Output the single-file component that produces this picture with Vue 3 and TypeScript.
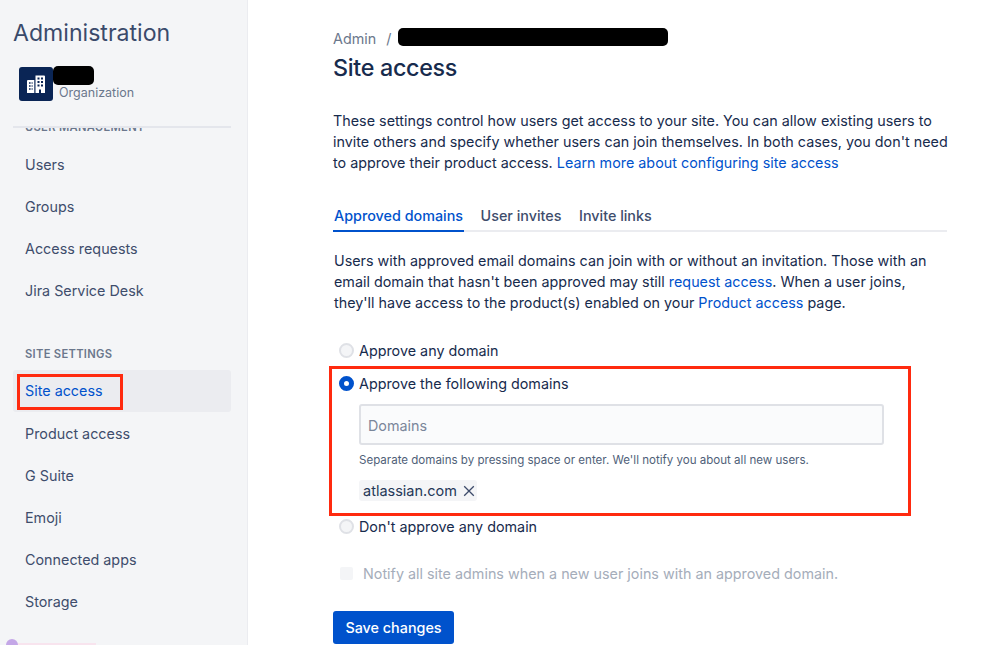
<script setup lang="ts">
const userItems: string[] = ['Users', 'Groups', 'Access requests', 'Jira Service Desk']
const siteItems: string[] = ['Site access', 'Product access', 'G Suite', 'Emoji', 'Connected apps', 'Storage']
</script>

<template>
  <div class="page">
    <aside class="side">
      <h2 class="side-title">Administration</h2>
      <div class="org">
        <div class="org-icon">
          <svg width="20" height="20" viewBox="0 0 20 20" fill="none">
            <path d="M9.5 1.5h8.5a1 1 0 0 1 1 1V19h-4v-3.5h-2V19H9.5z" fill="#fff" />
            <path d="M8.3 6H2a1 1 0 0 0-1 1v12h7.3z" fill="#fff" />
            <path d="M3 9h1.6M5.6 9h1M3 12h1.6M5.6 12h1M3 15h1.6M5.6 15h1" stroke="#0a2555" stroke-width="1.6" />
            <path d="M11.5 4.5h2M15 4.5h2M11.5 8h2M15 8h2M11.5 11.5h2M15 11.5h2" stroke="#0a2555" stroke-width="1.8" />
          </svg>
        </div>
        <div class="org-text">
          <span class="redact org-redact"></span>
          <span class="org-sub">Organization</span>
        </div>
      </div>
      <div class="scroller">
        <div class="scroll-inner">
          <div class="section first">USER MANAGEMENT</div>
          <a v-for="i in userItems" :key="i" class="nav">{{ i }}</a>
          <div class="section second">SITE SETTINGS</div>
          <a v-for="i in siteItems" :key="i" class="nav" :class="{ active: i === 'Site access' }">
            {{ i }}
            <span v-if="i === 'Site access'" class="mark side-mark"></span>
          </a>
        </div>
      </div>
      <div class="profile"><span class="dot"></span><span class="pill"></span></div>
    </aside>

    <main class="main">
      <div class="crumbs">
        <span>Admin</span><span class="slash">/</span><span class="redact crumb-redact"></span>
      </div>
      <h1 class="title">Site access</h1>
      <p class="intro">
        These settings control how users get access to your site. You can allow existing users to invite others and specify whether users can join themselves. In both cases, you don't need to approve their product access.
        <a class="link">Learn more about configuring site access</a>
      </p>
      <div class="tabs">
        <span class="tab on">Approved domains</span>
        <span class="tab">User invites</span>
        <span class="tab">Invite links</span>
      </div>
      <p class="desc">
        Users with approved email domains can join with or without an invitation. Those with an email domain that hasn't been approved may still <a class="link">request access</a>. When a user joins, they'll have access to the product(s) enabled on your <a class="link">Product access</a> page.
      </p>
      <div class="opt first-opt"><span class="radio"></span>Approve any domain</div>
      <div class="boxed">
        <div class="opt"><span class="radio checked"></span>Approve the following domains</div>
        <div class="field">Domains</div>
        <div class="help">Separate domains by pressing space or enter. We'll notify you about all new users.</div>
        <div class="tag">
          atlassian.com
          <svg width="14" height="14" viewBox="0 0 14 14" fill="none">
            <path d="M2.2 2.2l9.6 9.6M11.8 2.2l-9.6 9.6" stroke="#3d4b6a" stroke-width="1.3" />
          </svg>
        </div>
        <span class="mark main-mark"></span>
      </div>
      <div class="opt"><span class="radio"></span>Don't approve any domain</div>
      <div class="check-row"><span class="check"></span>Notify all site admins when a new user joins with an approved domain.</div>
      <button class="save" type="button">Save changes</button>
    </main>
  </div>
</template>

<style>
html, body { margin: 0; background: #fff; }
</style>

<style scoped>
.page {
  display: flex;
  width: 999px;
  height: 645px;
  overflow: hidden;
  font-family: Inter, "Liberation Sans", sans-serif;
  font-size: 14.35px;
  color: #172b4d;
  background: #fff;
}
.side {
  position: relative;
  width: 248px;
  flex: none;
  box-sizing: border-box;
  padding: 16px 16px 0 13px;
  background: #f4f5f7;
  border-right: 1px solid #ebecf0;
  display: flex;
  flex-direction: column;
}
.side-title {
  margin: 0;
  font-size: 23.1px;
  line-height: 34px;
  font-weight: 400;
  color: #3a4a6b;
}
.org {
  display: flex;
  margin: 17px 0 0 6px;
  height: 42px;
}
.org-icon {
  width: 34px;
  height: 34px;
  border-radius: 3px;
  background: #0a2555;
  display: flex;
  align-items: center;
  justify-content: center;
}
.org-text {
  position: relative;
  padding: 18px 0 0 6px;
}
.org-sub {
  font-size: 12.5px;
  line-height: 16px;
  color: #6b778c;
  display: block;
}
.redact {
  display: block;
  background: #000;
  border-radius: 5px;
}
.org-redact {
  position: absolute;
  left: 0;
  top: -1px;
  width: 41px;
  height: 19px;
}
.scroller {
  margin-top: 17px;
  border-top: 2px solid #e4e6ec;
  height: 520px;
  overflow: hidden;
}
.scroll-inner {
  margin-top: -8px;
}
.section {
  padding-left: 12px;
  font-size: 11.2px;
  line-height: 14px;
  font-weight: 600;
  letter-spacing: 0.3px;
  color: #6b778c;
}
.first { margin-bottom: 10px; }
.second { margin-top: 35px; margin-bottom: 9px; }
.nav {
  position: relative;
  display: block;
  height: 42px;
  line-height: 42px;
  padding-left: 12px;
  color: #3e4d6c;
  border-radius: 3px;
}
.nav.active {
  color: #0052cc;
  background: #ebecf0;
  margin-bottom: 1px;
}
.mark {
  position: absolute;
  box-sizing: border-box;
  border: 3px solid #ff2a0f;
}
.side-mark {
  left: 4px;
  top: 4px;
  width: 106px;
  height: 36px;
}
.profile {
  position: absolute;
  left: 6px;
  top: 639px;
  display: flex;
}
.dot {
  width: 12px;
  height: 12px;
  border-radius: 50%;
  background: #c4a7e7;
}
.pill {
  width: 78px;
  height: 6px;
  margin-top: 4px;
  background: #f8e4ee;
}
.main {
  flex: 1;
  min-width: 0;
  padding: 28px 52px 0 85px;
}
.crumbs {
  display: flex;
  align-items: center;
  height: 20px;
  color: #6b778c;
}
.slash { margin: 0 7px 0 10px; }
.crumb-redact {
  width: 270px;
  height: 18px;
  margin-top: -3px;
}
.title {
  margin: 7px 0 0;
  font-size: 23.3px;
  line-height: 26px;
  font-weight: 500;
  letter-spacing: -0.3px;
  color: #172b4d;
}
.intro {
  margin: 29px -4px 0 0;
  line-height: 21px;
}
.link { color: #0052cc; }
.tabs {
  display: flex;
  gap: 15.5px;
  margin-top: 31px;
  height: 28px;
  box-sizing: border-box;
  border-bottom: 2px solid #ebecf0;
}
.tab {
  height: 28px;
  box-sizing: border-box;
  padding: 1px 1px 0;
  line-height: 21px;
  font-weight: 500;
  color: #3e4d6c;
}
.tab.on {
  color: #0052cc;
  border-bottom: 2px solid #0052cc;
}
.desc {
  margin: 18px 0 0 1px;
  line-height: 21px;
}
.opt {
  display: flex;
  align-items: center;
  height: 20px;
  margin-left: 6px;
  gap: 5px;
}
.first-opt { margin-top: 27px; }
.radio {
  width: 15px;
  height: 15px;
  box-sizing: border-box;
  border-radius: 50%;
  border: 2px solid #dfe1e6;
  background: #f4f5f7;
  flex: none;
}
.radio.checked {
  border: 5px solid #0052cc;
  background: #fff;
}
.boxed {
  position: relative;
  margin-top: 13px;
  height: 143px;
}
.field {
  margin: 11px 0 0 26px;
  width: 525px;
  height: 41px;
  box-sizing: border-box;
  border: 2px solid #dfe1e6;
  border-radius: 3px;
  background: #fafbfc;
  padding-left: 7px;
  line-height: 40px;
  color: #7a869a;
}
.help {
  margin: 8px 0 0 26px;
  font-size: 11.55px;
  line-height: 14px;
  color: #505f79;
}
.tag {
  display: flex;
  align-items: center;
  gap: 5px;
  width: fit-content;
  margin: 13px 0 0 26px;
  height: 21px;
  padding: 0 1px 0 4px;
  border-radius: 3px;
  background: #f4f5f7;
  font-size: 14.5px;
  color: #253858;
}
.main-mark {
  left: -4px;
  top: -7px;
  width: 582px;
  height: 150px;
}
.check-row {
  display: flex;
  align-items: center;
  gap: 10px;
  margin: 27px 0 0 7px;
  height: 20px;
  color: #a5adba;
}
.check {
  width: 13px;
  height: 13px;
  border-radius: 2px;
  background: #f4f5f7;
  flex: none;
}
.save {
  display: block;
  margin-top: 28px;
  width: 121px;
  height: 33px;
  border: 0;
  border-radius: 3px;
  background: #0052cc;
  color: #fff;
  font: 500 14.35px Inter, "Liberation Sans", sans-serif;
  padding: 0;
}
</style>
